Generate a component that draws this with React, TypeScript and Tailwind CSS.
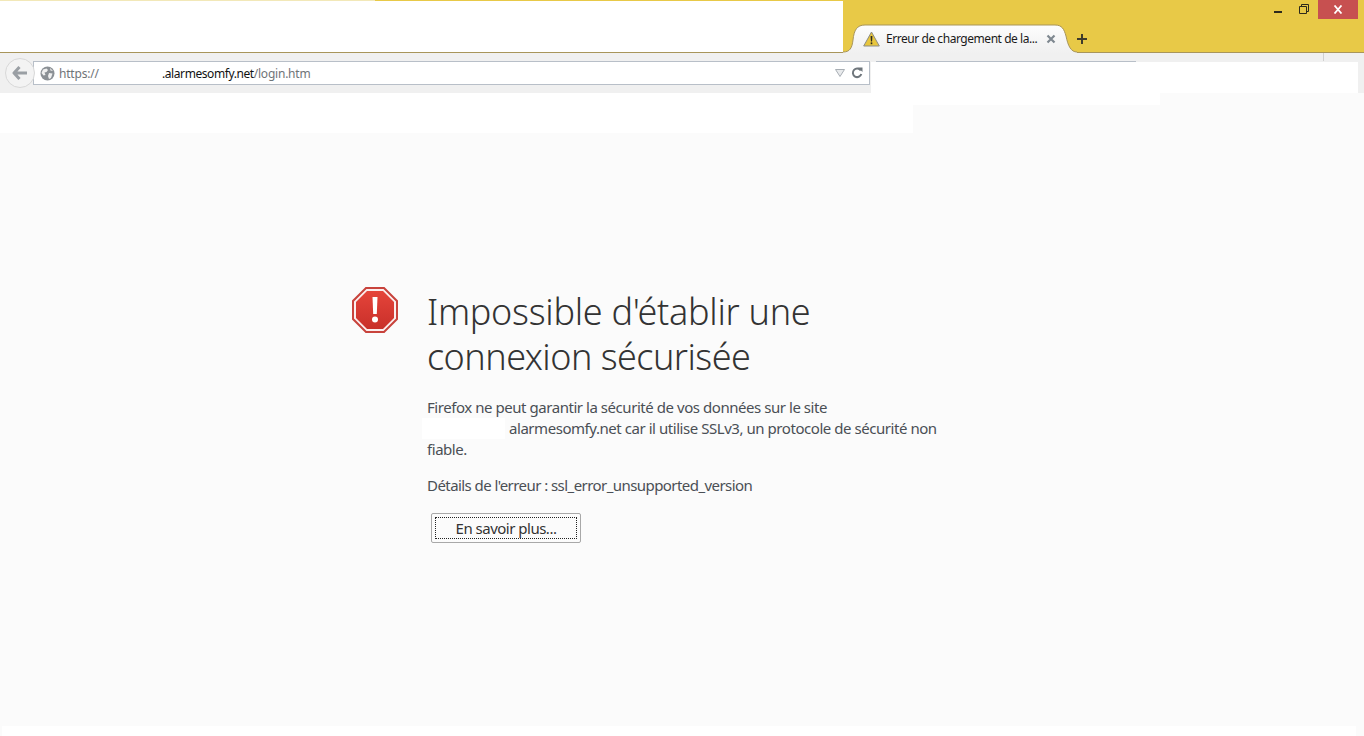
const uiFont = { fontFamily: '"Noto Sans", "Open Sans", sans-serif' };

function TabShape() {
  return (
    <svg className="absolute left-0 top-0" width="234" height="29" viewBox="0 0 234 29">
      <defs>
        <linearGradient id="tabFill" x1="0" y1="0" x2="0" y2="1">
          <stop offset="0" stopColor="#fdfdfd" />
          <stop offset="1" stopColor="#f0f0f0" />
        </linearGradient>
      </defs>
      <path
        d="M0 29V28C7 28 9 24 10 16C11 6 14 1 22 1H212C219 1 221 5 223 12C225 22 228 28 234 28V29Z"
        fill="url(#tabFill)"
      />
      <path
        d="M0 28C7 28 9 24 10 16C11 6 14 1 22 1H212C219 1 221 5 223 12C225 22 228 28 234 28"
        fill="none"
        stroke="#a8955a"
        strokeWidth="1"
      />
    </svg>
  );
}

function WarningIcon() {
  return (
    <svg width="17" height="16" viewBox="0 0 17 16">
      <path d="M8.500 1L16.300 15H0.700Z" fill="#e8c63c" stroke="#8c8c84" strokeWidth="1" strokeLinejoin="round" />
      <path d="M7.600 5H9.400L9.100 10.500H7.900Z" fill="#2c2a20" />
      <rect x="7.700" y="11.400" width="1.600" height="1.800" fill="#2c2a20" />
    </svg>
  );
}

function TitleBar() {
  return (
    <div className="flex h-[53px] shrink-0 border-b border-[#a8955a] bg-[#e8c947]">
      <div className="mt-px h-[51px] w-[843px] bg-white">
        <div className="-mt-px h-px w-[375px] bg-[#f2e8b8]" />
      </div>
      <div className="relative mt-[24px] h-[29px] w-[234px]">
        <TabShape />
        <div className="relative flex h-full items-center pl-[20px] pt-px">
          <WarningIcon />
          <span className="ml-[6px] w-[155px] whitespace-nowrap text-[12px] tracking-[-0.45px] text-[#1a1a1a]">
            Erreur de chargement de la...
          </span>
          <svg className="ml-[5px]" width="10" height="10" viewBox="0 0 10 10">
            <path d="M1.500 1.500L8.500 8.500M8.500 1.500L1.500 8.500" stroke="#7f8890" strokeWidth="2.200" />
          </svg>
        </div>
      </div>
      <svg className="-ml-px mt-[33px]" width="12" height="12" viewBox="0 0 12 12">
        <path d="M6 1V11M1 6H11" stroke="#3f3b2c" strokeWidth="2" />
      </svg>
      <div className="flex-1" />
      <div className="flex h-[19px] items-start">
        <svg className="mt-[6px]" width="10" height="10" viewBox="0 0 10 10">
          <rect x="1" y="5" width="8" height="2" fill="#2d2a1c" />
        </svg>
        <svg className="ml-[16px] mt-[4px]" width="10" height="10" viewBox="0 0 10 10">
          <path d="M2.500 2.500V0.500H9.500V7.500H7.500M0.500 2.500H7.500V9.500H0.500Z" fill="none" stroke="#2d2a1c" strokeWidth="1" />
        </svg>
        <div className="ml-[9px] mr-[6px] flex h-[19px] w-[40px] items-center justify-center bg-[#c75050]">
          <svg width="10" height="9" viewBox="0 0 10 9">
            <path d="M1.500 0.500L8.500 8.500M8.500 0.500L1.500 8.500" stroke="#ffffff" strokeWidth="1.800" />
          </svg>
        </div>
      </div>
    </div>
  );
}

function Toolbar() {
  return (
    <div className="flex h-[40px] shrink-0 items-start bg-[#f0f0f0] pl-[5px] pt-[8px]">
      <div className="z-10 -mt-[3px] flex h-[30px] w-[30px] shrink-0 items-center justify-center rounded-full border border-[#d8d8d8] bg-[#f3f3f3]">
        <svg width="16" height="14" viewBox="0 0 16 14">
          <path d="M7.500 1L2 7L7.500 13M2.500 7H15" fill="none" stroke="#9a9fa4" strokeWidth="3" strokeLinejoin="round" />
        </svg>
      </div>
      <div className="-ml-[2px] flex h-[24px] w-[837px] items-center border border-[#b8bfc8] bg-white pl-[6px]">
        <svg width="15" height="15" viewBox="0 0 15 15">
          <circle cx="7.500" cy="7.500" r="7" fill="#8b9095" />
          <path d="M3 3.500L6.500 2.500L8 4L6.500 6L4.500 6.500L5.500 9L3.500 9.500L1.500 7ZM9 7L12.500 7.500L11 12L9 13L8 10Z M10 2L13 5L10.500 4.500Z" fill="#f0f0f0" />
        </svg>
        <span className="ml-[4px] w-[103px] pt-px text-[12px] tracking-[-0.2px] text-[#6f7478]">https://</span>
        <span className="pt-px text-[12px] tracking-[-0.42px] text-[#111]">.alarmesomfy.net</span>
        <span className="pt-px text-[12px] tracking-[-0.22px] text-[#6f7478]">/login.htm</span>
        <div className="flex-1" />
        <svg width="10" height="8" viewBox="0 0 10 8">
          <path d="M0.500 0.500H9.500L5 7.500Z" fill="#e8eaec" stroke="#a8aeb4" strokeWidth="1" />
        </svg>
        <svg className="ml-[6px] mr-[6px]" width="12" height="12" viewBox="0 0 12 12">
          <path d="M9.800 3.500A4.300 4.300 0 1 0 10.300 7" fill="none" stroke="#6f767c" strokeWidth="2" />
          <path d="M7 0.500H11.500V5Z" fill="#6f767c" />
        </svg>
      </div>
      <div className="ml-[6px] h-px w-[260px] bg-[#b8bfc8]" />
      <div className="flex-1" />
      <div className="-mt-[8px] mr-[40px] h-[8px] w-px bg-[#d0d0d0]" />
    </div>
  );
}

function StopIcon() {
  return (
    <svg className="shrink-0" width="46" height="46" viewBox="0 0 46 46">
      <defs>
        <linearGradient id="stopFill" x1="0" y1="0" x2="0" y2="1">
          <stop offset="0" stopColor="#e5443a" />
          <stop offset="1" stopColor="#c9302a" />
        </linearGradient>
      </defs>
      <path d="M14 1H32L45 14V32L32 45H14L1 32V14Z" fill="#fbeeee" stroke="#c8433c" strokeWidth="2" />
      <path d="M15 4H31L42 15V31L31 42H15L4 31V15Z" fill="url(#stopFill)" />
      <path d="M20.500 10H25.500L24.800 27H21.200Z" fill="#ffffff" />
      <circle cx="23" cy="32.500" r="3" fill="#ffffff" />
    </svg>
  );
}

function ErrorBody() {
  return (
    <div className="ml-[352px] flex pt-[194px]">
      <StopIcon />
      <div className="ml-[29px] w-[530px] text-[#4a4f55]">
        <h1 className="mt-[2px] text-[36px] font-light leading-[45px] tracking-[-0.28px] text-[#333]">
          Impossible d'établir une
          <br />
          <span className="tracking-[-0.54px]">connexion sécurisée</span>
        </h1>
        <p className="mt-[18px] whitespace-nowrap text-[15px] leading-[21px] tracking-[-0.45px]">
          Firefox ne peut garantir la sécurité de vos données sur le site
          <br />
          <span className="-ml-[5px] mr-[4px] inline-block h-[21px] w-[83px] bg-white align-top" />
          alarmesomfy.net car il utilise SSLv3, un protocole de sécurité non
          <br />
          fiable.
        </p>
        <p className="mt-[15px] text-[15px] leading-[21px] tracking-[-0.56px]">
          Détails de l'erreur : ssl_error_unsupported_version
        </p>
        <button className="ml-[4px] mt-[17px] block h-[30px] w-[150px] rounded-[2px] border border-[#a8a8a8] bg-[#fbfbfb] p-[3px]">
          <span className="flex h-full w-full items-center justify-center border border-dotted border-[#222] text-[15px] tracking-[-0.5px] text-[#333]">
            En savoir plus...
          </span>
        </button>
      </div>
    </div>
  );
}

export default function App() {
  return (
    <div className="relative flex h-[736px] w-[1364px] flex-col overflow-hidden bg-[#fbfbfb]" style={uiFont}>
      <TitleBar />
      <Toolbar />
      <main className="flex-1">
        <ErrorBody />
      </main>
      {/* masked out areas of the original capture */}
      <div className="absolute left-[871px] top-[62px] h-[31px] w-[487px] bg-white" />
      <div className="absolute left-[871px] top-[93px] h-[12px] w-[289px] bg-white" />
      <div className="absolute left-0 top-[93px] h-[40px] w-[913px] bg-white" />
      <div className="absolute bottom-0 left-[2px] h-[10px] w-[1354px] bg-white" />
    </div>
  );
}
